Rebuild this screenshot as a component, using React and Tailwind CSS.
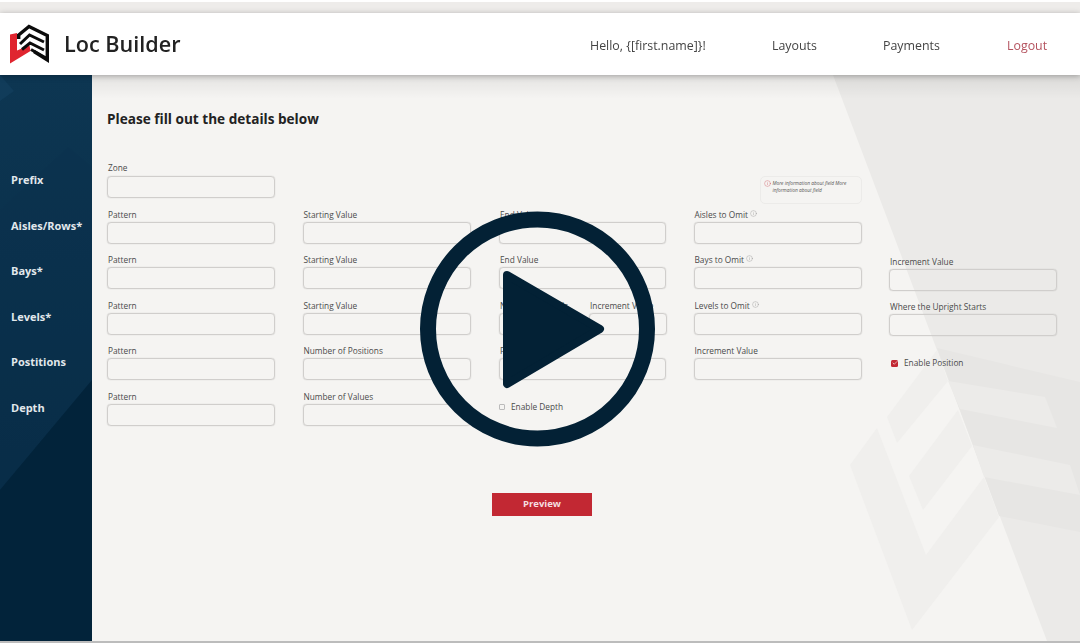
import { Check, Info } from "lucide-react";

const sideItems = ["Prefix", "Aisles/Rows*", "Bays*", "Levels*", "Postitions", "Depth"];

function Field({ label, info, className = "" }) {
  return (
    <div className={className}>
      <div className="flex h-[13px] items-start gap-[2px] whitespace-nowrap pl-px text-[8.3px] leading-[11px] text-[#4a4a4a]">
        {label}
        {info && <Info size={7} strokeWidth={1} className="mt-[1px] text-[#777]" />}
      </div>
      <input className="block h-[22px] w-full rounded-[4px] border border-[#d0cecc] bg-transparent shadow-[0_0_1px_rgba(0,0,0,0.25)]" />
    </div>
  );
}

function Logo() {
  return (
    <svg width="42" height="42" viewBox="10 22 42 42" className="mr-[13px] shrink-0">
      <path d="M11 33.5 L18 32 V49.5 L30.5 44.5 L31.5 50 L11 62.5 Z" fill="#e0252f" />
      <g fill="none" stroke="#0c0c0c" strokeWidth="3.4">
        <path d="M19.7 38 V34 L30 25.5 L48.3 34.5 V59 L35 50.5" />
        <path d="M21 43 L30.5 34 L45 41" strokeWidth="3" />
        <path d="M23 48.5 L31 42 L45 49" strokeWidth="3" />
        <path d="M32 48.5 L47 57" strokeWidth="3" />
      </g>
    </svg>
  );
}

function Backdrop() {
  return (
    <svg className="absolute inset-0 h-full w-full" viewBox="92 75 988 566" preserveAspectRatio="none">
      <polygon points="833,75 1080,75 1080,641 1047,641" fill="#ebeae8" />
      <polygon points="937,348 1080,382 1080,532 999,516" fill="#e7e6e4" />
      <polygon points="948,381 1045,397 1057,428 960,409" fill="#ecebe9" />
      <polygon points="973,445 1070,465 1080,495 984,477" fill="#ecebe9" />
      <polygon points="877,428 850,465 912,630 999,517 984,477 926,555" fill="#f0efed" />
      <polygon points="958,410 909,476 923,510 972,446" fill="#f0efed" />
      <polygon points="937,350 887,417 897,443 948,381" fill="#f0efed" />
    </svg>
  );
}

function Sidebar() {
  return (
    <aside className="relative w-[92px] shrink-0 overflow-hidden bg-gradient-to-b from-[#0d3652] to-[#052740]">
      <svg className="absolute inset-0 h-full w-full" viewBox="0 0 92 566" preserveAspectRatio="none">
        <polygon points="0,0 14,16 0,26" fill="#113c5a" />
        <polygon points="0,135 68,72 92,92 92,305 0,415" fill="#0b314c" opacity="0.35" />
        <polygon points="0,415 92,305 92,566 0,566" fill="#02233a" />
      </svg>
      <nav className="relative flex flex-col gap-[29.6px] pl-[11px] pt-[97px]">
        {sideItems.map((item) => (
          <div key={item} className="h-[16px] text-[11px] font-bold leading-[16px] text-[#e2e8ec]">
            {item}
          </div>
        ))}
      </nav>
    </aside>
  );
}

export default function App() {
  return (
    <div className="relative h-[643px] w-[1080px] overflow-hidden bg-white font-['Open_Sans',sans-serif]">
      <div className="flex h-full flex-col blur-[0.45px]">
        <div className="mt-[2px] h-[11px] shrink-0 bg-[#eeecea]" />
        <header className="relative z-10 flex h-[62px] shrink-0 items-center bg-white pl-[9px] shadow-[0_1px_6px_rgba(0,0,0,0.3)]">
          <Logo />
          <div className="text-[21.6px] font-semibold leading-none text-[#222]">Loc Builder</div>
          <nav className="ml-auto flex items-center pt-[5px] text-[12.4px] text-[#444]">
            <span className="w-[182px]">Hello, {"{[first.name]}"}!</span>
            <span className="w-[111px]">Layouts</span>
            <span className="w-[124px]">Payments</span>
            <span className="w-[73px] text-[#b4525e]">Logout</span>
          </nav>
        </header>

        <div className="flex h-[566px] shrink-0">
          <Sidebar />
          <main className="relative flex-1 bg-[#f5f4f2] pl-[15px] pt-[35px]">
            <Backdrop />
            <div className="absolute inset-x-0 top-0 h-[24px] bg-gradient-to-b from-[#00000012] to-transparent" />
            <div className="relative">
              <h1 className="h-[18px] text-[13.6px] font-bold leading-[18px] text-[#222]">Please fill out the details below</h1>

              <div className="mt-[34px] grid w-[950px] grid-cols-5 gap-x-[27.5px] gap-y-[10.6px]">
                <Field label="Zone" className="[&>div]:h-[14px]" />
                <div className="col-span-2" />
                <div className="-mb-[6px] mt-[14px] flex h-[28px] w-[102px] gap-[2px] justify-self-end rounded-[5px] border border-[#ecebe9] px-[3px] py-[3px] text-[4.8px] italic leading-[7px] text-[#555]">
                  <Info size={7} strokeWidth={1} className="shrink-0 text-[#c22833]" />
                  <span>More information about field More information about field</span>
                </div>
                <div />

                <Field label="Pattern" />
                <Field label="Starting Value" />
                <Field label="End Value" className="pl-px" />
                <Field label="Aisles to Omit" info />
                <div />

                <Field label="Pattern" />
                <Field label="Starting Value" />
                <Field label="End Value" className="pl-px" />
                <Field label="Bays to Omit" info />
                <Field label="Increment Value" className="-mb-[1.5px] mt-[1.5px]" />

                <Field label="Pattern" />
                <Field label="Starting Value" />
                <div className="grid grid-cols-[78px_78px] gap-x-[12px] pl-px">
                  <Field label="Number of Levels" />
                  <Field label="Increment Value" />
                </div>
                <Field label="Levels to Omit" info />
                <Field label="Where the Upright Starts" className="-mb-[1.5px] mt-[1.5px]" />

                <Field label="Pattern" />
                <Field label="Number of Positions" />
                <Field label="Pattern" className="pl-px" />
                <Field label="Increment Value" />
                <label className="flex items-center gap-[6px] self-end pb-[11px] pl-[2px] text-[8.3px] leading-[12px] text-[#4a4a4a]">
                  <span className="flex h-[7px] w-[7px] items-center justify-center rounded-[1.5px] bg-[#c22833]">
                    <Check size={6} strokeWidth={2.5} className="text-white" />
                  </span>
                  Enable Position
                </label>

                <Field label="Pattern" />
                <Field label="Number of Values" />
                <label className="flex items-center gap-[6px] self-end pb-[13px] pl-px text-[8.3px] leading-[12px] text-[#4a4a4a]">
                  <span className="h-[6px] w-[6px] rounded-[1px] border border-[#bbb]" />
                  Enable Depth
                </label>
              </div>

              <button className="ml-[385px] mt-[67px] block h-[23px] w-[100px] bg-[#c22833] text-[9.5px] font-bold text-[#f6dfe0]">
                Preview
              </button>
            </div>
          </main>
        </div>
        <div className="h-[2px] shrink-0 bg-[#bcbcbc]" />
      </div>

      {/* play button sits over the whole screenshot */}
      <svg className="absolute inset-0" width="1080" height="643" viewBox="0 0 1080 643">
        <circle cx="537.5" cy="329" r="109.5" fill="none" stroke="#032135" strokeWidth="16" />
        <polygon points="507,275 600,329 507,384" fill="#032135" stroke="#032135" strokeWidth="8" strokeLinejoin="round" />
      </svg>
    </div>
  );
}
